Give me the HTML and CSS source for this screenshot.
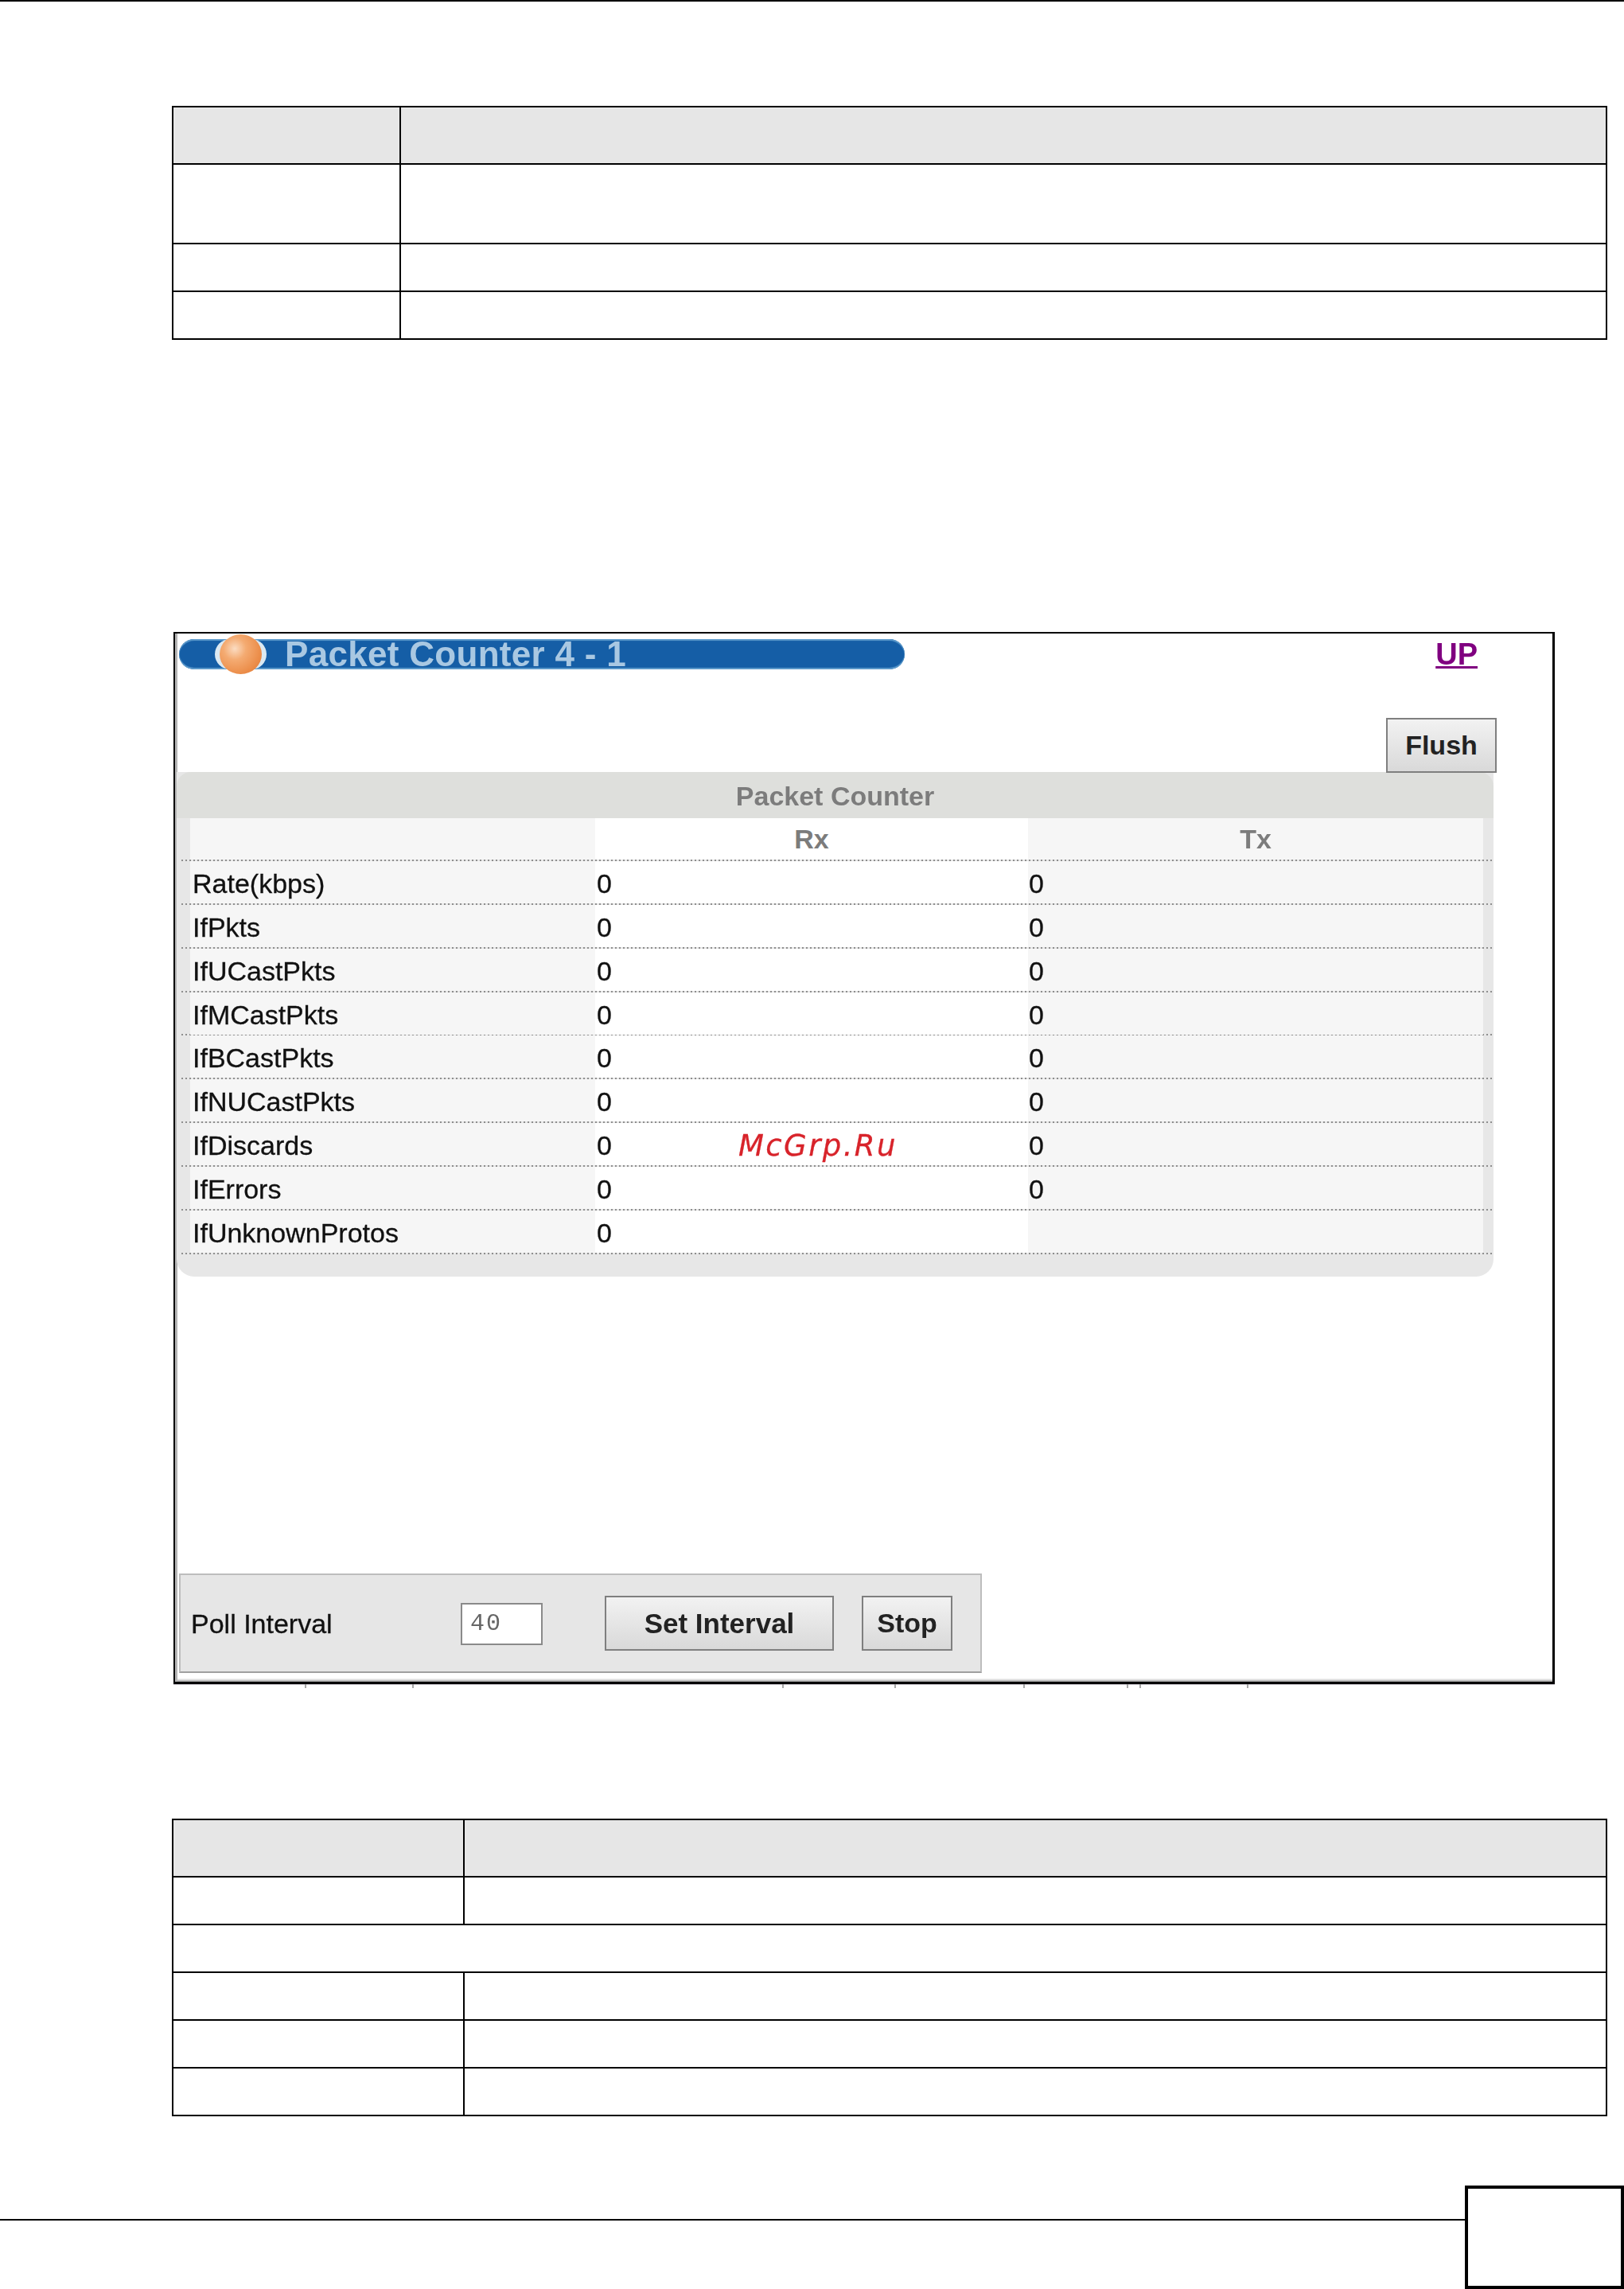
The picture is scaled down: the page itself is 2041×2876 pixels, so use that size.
FILE: index.html
```html
<!DOCTYPE html>
<html lang="en">
<head>
<meta charset="utf-8">
<title>Packet Counter</title>
<link rel="stylesheet" href="styles.css">
</head>
<body>
<div class="page">
  <div class="top-rule"></div>

  <table class="doc-table doc-table-a">
    <tr class="row-head"><td class="col-a"></td><td></td></tr>
    <tr class="row-double"><td></td><td></td></tr>
    <tr class="row-single"><td></td><td></td></tr>
    <tr class="row-single"><td></td><td></td></tr>
  </table>

  <div class="shot">
    <div class="shot-inner">
      <div class="title-row">
        <div class="title-bar">
          <span class="halo"><span class="ball"></span></span>
          <span class="title-text">Packet Counter 4 - 1</span>
        </div>
        <a class="up-link" href="#">UP</a>
      </div>
      <div class="flush-row"><button class="btn btn-flush" type="button">Flush</button></div>

      <div class="counter">
        <div class="counter-title">Packet Counter</div>
        <div class="crow crow-head"><span class="c1"></span><span class="c2 chead">Rx</span><span class="c3 chead">Tx</span></div>
        <div class="crow"><span class="c1">Rate(kbps)</span><span class="c2">0</span><span class="c3">0</span></div>
        <div class="crow"><span class="c1">IfPkts</span><span class="c2">0</span><span class="c3">0</span></div>
        <div class="crow"><span class="c1">IfUCastPkts</span><span class="c2">0</span><span class="c3">0</span></div>
        <div class="crow"><span class="c1">IfMCastPkts</span><span class="c2">0</span><span class="c3">0</span></div>
        <div class="crow"><span class="c1">IfBCastPkts</span><span class="c2">0</span><span class="c3">0</span></div>
        <div class="crow"><span class="c1">IfNUCastPkts</span><span class="c2">0</span><span class="c3">0</span></div>
        <div class="crow"><span class="c1">IfDiscards</span><span class="c2">0<span class="watermark">McGrp.Ru</span></span><span class="c3">0</span></div>
        <div class="crow"><span class="c1">IfErrors</span><span class="c2">0</span><span class="c3">0</span></div>
        <div class="crow"><span class="c1">IfUnknownProtos</span><span class="c2">0</span><span class="c3"></span></div>
      </div>

      <div class="poll">
        <span class="poll-label">Poll Interval</span>
        <input class="poll-input" type="text" value="40">
        <button class="btn btn-set" type="button">Set Interval</button>
        <button class="btn btn-stop" type="button">Stop</button>
      </div>
    </div>
  </div>
  <svg class="ticks" width="1736" height="5" viewBox="0 0 1736 5">
    <path d="M0 0.5H1736" stroke="#c4c0c8" stroke-width="1" fill="none"/>
    <path d="M166 0V5M301 0V5M766 0V5M907 0V5M1069 0V5M1199 0V5M1215 0V5M1350 0V5" stroke="#8a8a8a" stroke-width="1.5" fill="none"/>
  </svg>

  <table class="doc-table doc-table-b">
    <tr class="row-head"><td class="col-b"></td><td></td></tr>
    <tr class="row-single"><td></td><td></td></tr>
    <tr class="row-single"><td colspan="2"></td></tr>
    <tr class="row-single"><td></td><td></td></tr>
    <tr class="row-single"><td></td><td></td></tr>
    <tr class="row-single"><td></td><td></td></tr>
  </table>

  <div class="footer">
    <div class="footer-rule"></div>
    <div class="page-box"></div>
  </div>
</div>
</body>
</html>
```

FILE: styles.css
```css
* { box-sizing: border-box; }
html, body { margin: 0; padding: 0; background: #fff; }
body { font-family: "Liberation Sans", Arial, sans-serif; color: #111; }
.page { width: 2041px; height: 2876px; overflow: hidden; }

.top-rule { height: 2px; background: #000; }

.doc-table {
  width: 1804px;
  margin-left: 216px;
  border-spacing: 0;
  border-collapse: separate;
  table-layout: fixed;
  border-top: 2px solid #000;
  border-left: 2px solid #000;
}
.doc-table td { padding: 0; border-right: 2px solid #000; border-bottom: 2px solid #000; }
.doc-table-a { margin-top: 131px; }
.doc-table-b { margin-top: 164px; }
.col-a { width: 286px; }
.col-b { width: 366px; }
.row-head td { height: 72px; background: #e6e6e6; }
.row-double td { height: 100px; }
.row-single td { height: 60px; }

.shot {
  width: 1736px;
  height: 1322px;
  margin: 367px 0 0 218px;
  border-style: solid;
  border-color: #000;
  border-width: 2px 3px 3px 2px;
  background: #fff;
}
.shot-inner {
  height: 100%;
  border-left: 3px solid #b4b4b4;
  filter: blur(0.6px);
  box-shadow: inset 0 -4px 3px -2px #9c9c9c;
  display: flex;
  flex-direction: column;
}

.title-row {
  display: flex;
  justify-content: space-between;
  align-items: flex-start;
  padding: 7px 94px 0 2px;
}
.title-bar {
  width: 912px;
  height: 38px;
  display: flex;
  align-items: center;
  padding-left: 45px;
  border-radius: 19px;
  background: #155ea6;
  box-shadow: inset 0 2px 1px #5f9ccc, inset 0 -2px 1px #5f9ccc;
}
.halo {
  width: 65px;
  height: 38px;
  border-radius: 19px;
  background: #dbe9f2;
  display: flex;
  align-items: center;
  justify-content: center;
}
.ball {
  width: 53px;
  height: 50px;
  flex: none;
  border-radius: 50%;
  background: radial-gradient(circle at 36% 36%, #fbdcc2 0, #f4ab72 30%, #ec8f4c 66%, #dc7430 100%);
}
.title-text {
  margin-left: 23px;
  font-size: 44px;
  line-height: 38px;
  font-weight: bold;
  letter-spacing: 0.3px;
  color: #a9c8e2;
  white-space: nowrap;
}
.up-link {
  font-size: 38px;
  line-height: 38px;
  font-weight: bold;
  color: #800080;
  text-decoration: underline;
}

.btn {
  font-family: "Liberation Sans", Arial, sans-serif;
  font-weight: bold;
  font-size: 34px;
  color: #222;
  height: 69px;
  padding: 0;
  border: 2px solid #7f7f7f;
  background: linear-gradient(#f2f2f2, #d9d9d9);
}
.flush-row {
  display: flex;
  justify-content: flex-end;
  padding-right: 70px;
  margin-top: 61px;
  position: relative;
  z-index: 1;
}
.btn-flush { width: 139px; }

.counter {
  width: 1655px;
  height: 634px;
  margin: -1px 0 0 -1px;
  background: #e7e7e7;
  border-radius: 0 0 22px 22px;
}
.counter-title {
  height: 58px;
  line-height: 60px;
  text-align: center;
  font-size: 34px;
  font-weight: bold;
  color: #7c7c7c;
  background: #dedfdc;
  border-radius: 18px 18px 0 0;
}
.crow {
  display: grid;
  grid-template-columns: 509px 544px 572px;
  padding: 0 13px 2px 17px;
  height: 54.85px;
  background: repeating-linear-gradient(90deg, #8e8e8e 0 2px, transparent 2px 5px) 6px 100% / 100% 2px no-repeat;
  font-size: 34px;
  line-height: 50px;
  -webkit-text-stroke: 0.3px #111;
}
.crow-head { height: 54px; -webkit-text-stroke: 0; }
.crow span { display: block; padding-top: 3px; }
.c1 { background: #f6f6f6; padding-left: 3px; }
.c2 { background: #fff; padding-left: 2px; position: relative; }
.c3 { background: #f6f6f6; padding-left: 1px; }
.crow .chead { padding: 0; line-height: 52px; text-align: center; font-weight: bold; color: #7c7c7c; }
.crow .watermark {
  display: inline;
  position: absolute;
  left: 180px;
  top: 4px;
  padding: 0;
  font-family: "DejaVu Sans", sans-serif;
  font-style: italic;
  font-size: 37px;
  letter-spacing: 2.4px;
  color: #d8232a;
  white-space: nowrap;
  -webkit-text-stroke: 0.3px #d8232a;
}

.poll {
  width: 1009px;
  height: 125px;
  margin: 373px 0 0 2px;
  padding-left: 13px;
  display: flex;
  align-items: center;
  background: #e6e6e6;
  border: 2px solid #bdbdbd;
  border-bottom-color: #9f9f9f;
}
.poll-label { width: 339px; font-size: 34px; padding-top: 2px; -webkit-text-stroke: 0.3px #111; }
.poll-input {
  width: 103px;
  height: 53px;
  padding: 0 0 0 10px;
  margin-top: 1px;
  border: 2px solid #8a8a8a;
  background: #fff;
  font-family: "Liberation Mono", monospace;
  font-size: 30px;
  letter-spacing: 2px;
  color: #666;
}
.btn-set { width: 288px; margin-left: 78px; font-size: 35px; }
.btn-stop { width: 114px; margin-left: 35px; }

.ticks { display: block; margin-left: 218px; }

.footer {
  display: flex;
  height: 130px;
  margin-top: 87px;
}
.footer-rule { flex: 1; height: 44px; border-bottom: 2px solid #000; }
.page-box { width: 200px; height: 130px; border: 4px solid #000; }
```
